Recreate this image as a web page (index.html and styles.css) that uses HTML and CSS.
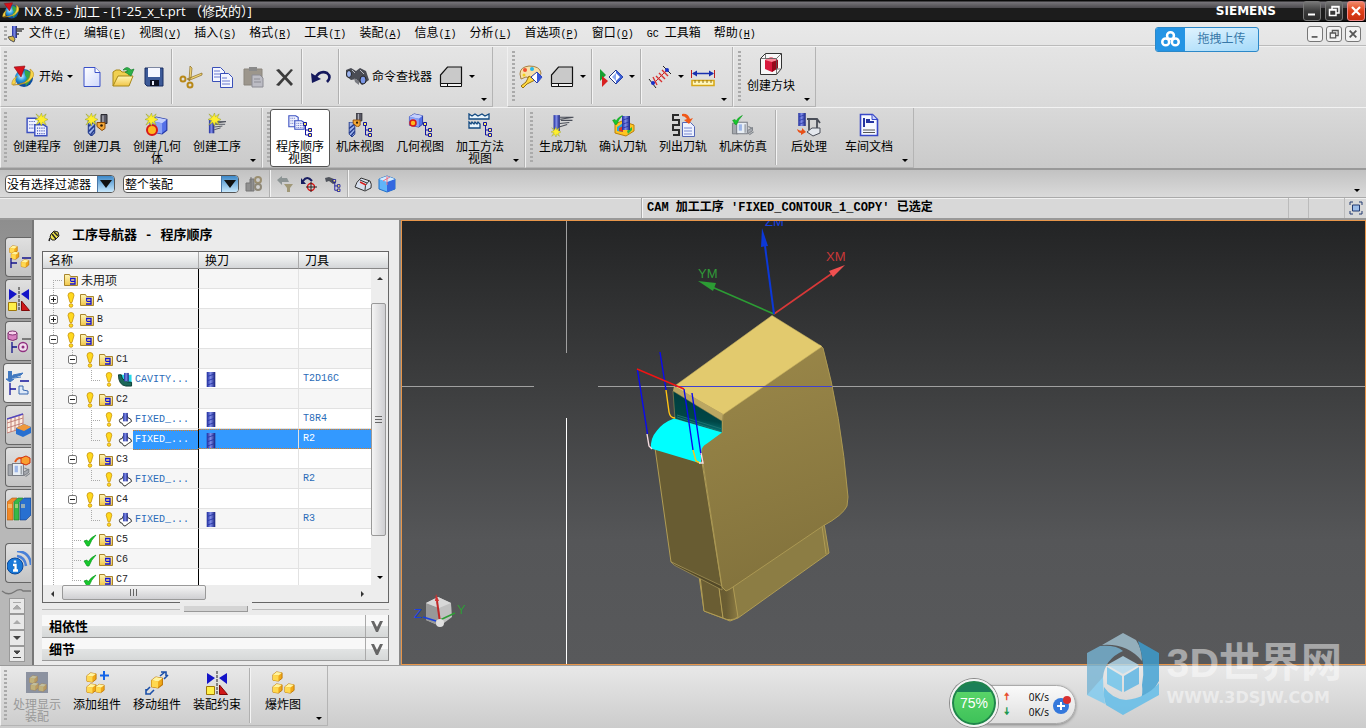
FILE: index.html
```
<!DOCTYPE html>
<html lang="zh-CN">
  <head>
    <meta charset="utf-8">
    <title>NX 8.5 - 加工</title>
    <meta name="viewport" content="width=device-width, initial-scale=1.0">
    <link rel="stylesheet" href="styles.css">
  </head>
  <body>

    <!-- shared icons -->
    <svg class="sprite" aria-hidden="true">
      <defs>
        <linearGradient id="g-drill"><stop offset="0" stop-color="#1c2a9c"/><stop offset=".45" stop-color="#7f8ce8"/><stop offset="1" stop-color="#16207c"/></linearGradient>
        <linearGradient id="g-folder" x2="0" y2="1"><stop offset="0" stop-color="#fff6b8"/><stop offset="1" stop-color="#f0c648"/></linearGradient>
        <linearGradient id="g-sheet" x2="1" y2="1"><stop offset="0" stop-color="#fff"/><stop offset="1" stop-color="#cfd8fb"/></linearGradient>
        <radialGradient id="g-globe" cx=".35" cy=".4"><stop offset="0" stop-color="#d8f4ff"/><stop offset=".5" stop-color="#2a9be0"/><stop offset="1" stop-color="#0b4da0"/></radialGradient>
      </defs>
      <symbol id="nx" viewBox="0 0 24 24">
        <circle cx="13" cy="13" r="9" fill="url(#g-globe)"/>
        <path d="M14 5q7 1 7 8-3 5-6 8-2-5 1-8-3-3-2-8z" fill="#35a54a"/>
        <path d="M19 4q5 3 3 8-5 8-20 8 15-1 17-9 1-4 0-7z" fill="#f7d64a" stroke="#b8860b" stroke-width=".6"/>
        <path d="M1 20q-1-5 5-9-3 5-1 7z" fill="#f7d64a" stroke="#b8860b" stroke-width=".5"/>
        <path d="M3 2l11-1-4 11z" fill="#d8121c" stroke="#8a0a10" stroke-width=".6"/>
      </symbol>
      <symbol id="drill" viewBox="0 0 8 14">
        <rect width="8" height="14" fill="url(#g-drill)"/>
        <path d="M1 4l6-2M1 8l6-2M1 12l6-2" stroke="#2434a4" stroke-width=".8"/>
      </symbol>
      <symbol id="star" viewBox="0 0 14 14">
        <path d="M7 0l1 4 4-3-2 4 4 2-4 2 2 4-4-3-1 4-2-4-4 3 3-5-4-1 4-2-3-4 4 3z" fill="#ffee2e" stroke="#8c9a20" stroke-width=".5"/>
      </symbol>
      <symbol id="tree" viewBox="0 0 9 15">
        <path d="M2.500 3v10h4M2.500 8h4" fill="none" stroke="#1414a0"/>
        <path d="M.5.5h3v3h-3zM5.500 6.500h3v3h-3zM5.500 11.500h3v3h-3z" fill="#ffef60" stroke="#1414a0"/>
      </symbol>
      <symbol id="program" viewBox="0 0 20 18">
        <path d="M1 1h8l3 2v11H1z" fill="#eef1ff" stroke="#3a4fc0" stroke-width="1.300"/>
        <path d="M3 4h6M3 7h6M3 10h6" stroke="#4455b8" stroke-dasharray="1 1"/>
        <path d="M8 7h8l3 2v8H8z" fill="#eef1ff" stroke="#3a4fc0" stroke-width="1.300"/>
        <path d="M10 10h8M10 12.500h8M10 15h8" stroke="#4455b8" stroke-dasharray="1 1"/>
      </symbol>
      <symbol id="cube" viewBox="0 0 16 16">
        <path d="M1 4l5-3 9 2v9l-4 3-10-2z" fill="#5470e8" stroke="#2438a8"/>
        <path d="M1 4l5-3 9 2-4 3z" fill="#c3cffc"/>
        <path d="M1 4l10 2v9L1 13z" fill="#8ba2f6"/>
      </symbol>
      <symbol id="gold" viewBox="0 0 12 12">
        <path d="M1 4l4-3 6 1v6l-4 3-6-1z" fill="#f0a818" stroke="#c07808"/>
        <path d="M1 4l4-3 6 1-4 3z" fill="#fff4a0"/>
        <path d="M1 4l6 1v6l-6-1z" fill="#ffd850"/>
      </symbol>
      <symbol id="holder" viewBox="0 0 12 16">
        <path d="M5 0h6v9H5z" fill="#5a5a66" stroke="#2a2a30"/>
        <path d="M7 1v8" stroke="#c8c8d0"/>
        <path d="M1 8h8v6l-3 2-5-4z" fill="#f4a838" stroke="#8a4a08"/>
        <circle cx="5.500" cy="11" r="1.300" fill="#2a1a08"/>
      </symbol>
      <symbol id="bit" viewBox="0 0 8 16">
        <path d="M1 0h6v13l-3 3-3-3z" fill="#9db3ea" stroke="#223a8c"/>
        <path d="M1 7l6-5M1 12l6-6M3 15l4-5" stroke="#223a8c" stroke-width="1.500"/>
      </symbol>
      <symbol id="folder" viewBox="0 0 16 16">
        <path d="M1.500 2.500h5l1 2h7v9h-13z" fill="url(#g-folder)" stroke="#a8842c"/>
        <path d="M7 6.500h5v5.500H7M8 9.300h4" fill="none" stroke="#1414d8" stroke-width="1.300"/>
        <path d="M7.600 6v3.500" stroke="#1414d8"/>
      </symbol>
      <symbol id="bang" viewBox="0 0 8 16">
        <path d="M4 .5q3 0 3 3L5 10.500H3L1 3.500q0-3 3-3z" fill="#ffd91e" stroke="#c89208" stroke-width=".8"/>
        <circle cx="4" cy="13.500" r="1.800" fill="#ffd91e" stroke="#c89208" stroke-width=".8"/>
      </symbol>
      <symbol id="check" viewBox="-1 -1 16 16">
        <path d="M1 8l3-1 1 2q3-5 8-7-5 5-7 11H4z" fill="#16c82c" stroke="#0a9a1a" stroke-width=".7"/>
      </symbol>
      <symbol id="cavity" viewBox="0 0 16 16">
        <path d="M2 3h13v11H9Q3 13 2 3z" fill="#28d8e8"/>
        <path d="M1 3h3q1 8 11 8v4H9Q1 14 1 3z" fill="#1c6858" stroke="#0a3a30"/>
        <rect x="7" y="1" width="5" height="9" fill="url(#g-drill)"/>
      </symbol>
      <symbol id="contour" viewBox="0 0 16 16">
        <path d="M2 9q0-2 3-2 1-4 3-4 3 0 3 3 4 1 4 4l-3 2-4 3q-2 0-3-3-3 0-3-3z" fill="#fff" stroke="#222"/>
        <rect x="6" y="1" width="5" height="9" fill="url(#g-drill)"/>
      </symbol>
      <symbol id="operation" viewBox="0 0 22 20">
        <path d="M8 4h13M9 7h11M8 10l9-1M8 13l7-2M8 6l13-2" stroke="#4a4e58" fill="none"/>
        <path d="M2 2h6v15H2z" fill="url(#g-drill)"/>
      </symbol>
      <symbol id="machine" viewBox="0 0 22 18">
        <path d="M1 5h5v10H1zM15 12l5-3v3l-4 3z" fill="#a4a8ae" stroke="#6a6e74" stroke-width=".7"/>
        <path d="M5 4h10v11H5z" fill="#e8eef4" stroke="#787c84"/>
        <path d="M7 6h3v6H7z" fill="#9cb6e8"/>
        <path d="M13 6v8M17 16l4-3M16 8l4 2" stroke="#80868c"/>
      </symbol>
      <symbol id="section" viewBox="0 0 24 24">
        <path d="M1.500 19V10l7-8h14v17z" fill="#c9c9c9" stroke="#111" stroke-width="1.200"/>
        <path d="M1.500 18.500h21v3h-21z" fill="#f4f4f4" stroke="#111"/>
        <path d="M8.500 18v4" stroke="#111"/>
      </symbol>
      <symbol id="mates" viewBox="0 0 24 24">
        <path d="M2 2l8 5-8 6zM22 2l-8 5 8 6z" fill="#1414c8"/>
        <path d="M12 0v24" stroke="#222" stroke-dasharray="3 1"/>
        <path d="M1.500 15.500h8v8h-8z" fill="#fff04a" stroke="#a07808"/>
        <path d="M14.500 14v9.500h8z" fill="#d01818" stroke="#800808"/>
      </symbol>
      <symbol id="restore" viewBox="0 0 12 12">
        <path d="M4 4V1.500h7V8H8.500M1.500 4.500h6.500V10.500H1.500zM1 5h7M4 2h7" fill="none" stroke="currentColor" stroke-width="1.500"/>
      </symbol>
      <symbol id="cross" viewBox="0 0 12 12"><path d="M2 2l8 8M10 2l-8 8" stroke="currentColor" stroke-width="2.200"/></symbol>
      <symbol id="minimise" viewBox="0 0 12 12"><path d="M2 9.500h7" stroke="currentColor" stroke-width="2"/></symbol>
    </svg>

    <header class="titlebar">
      <svg class="app-icon"><use href="#nx"/></svg>
      <h1>NX 8.5 - 加工 - [1-25_x_t.prt （修改的）]</h1>
      <span class="brand">SIEMENS</span>
      <div class="window-buttons">
        <button type="button" aria-label="最小化"><svg><use href="#minimise"/></svg></button>
        <button type="button" aria-label="还原"><svg><use href="#restore"/></svg></button>
        <button type="button" class="close" aria-label="关闭"><svg><use href="#cross"/></svg></button>
      </div>
    </header>

    <div class="chrome">
      <nav class="menubar">
        <span class="grip"></span>
        <svg class="menu-icon" viewBox="0 0 18 18"><path d="M5 1h5v12H5z" fill="url(#g-drill)"/><path d="M9 4h8M9 6h6M9 9h3" stroke="#444" stroke-width="1.500"/><path d="M1 12l5-1 2 3-1 3-4-2z" fill="#d8b848" stroke="#555"/></svg>
        <ul>
          <li><button type="button">文件<span>(<u>F</u>)</span></button></li>
          <li><button type="button">编辑<span>(<u>E</u>)</span></button></li>
          <li><button type="button">视图<span>(<u>V</u>)</span></button></li>
          <li><button type="button">插入<span>(<u>S</u>)</span></button></li>
          <li><button type="button">格式<span>(<u>R</u>)</span></button></li>
          <li><button type="button">工具<span>(<u>T</u>)</span></button></li>
          <li><button type="button">装配<span>(<u>A</u>)</span></button></li>
          <li><button type="button">信息<span>(<u>I</u>)</span></button></li>
          <li><button type="button">分析<span>(<u>L</u>)</span></button></li>
          <li><button type="button">首选项<span>(<u>P</u>)</span></button></li>
          <li><button type="button">窗口<span>(<u>O</u>)</span></button></li>
          <li><button type="button"><span>GC </span>工具箱</button></li>
          <li><button type="button">帮助<span>(<u>H</u>)</span></button></li>
        </ul>
        <div class="child-buttons">
          <button type="button" aria-label="最小化"><svg><use href="#minimise"/></svg></button>
          <button type="button" aria-label="还原"><svg><use href="#restore"/></svg></button>
          <button type="button" aria-label="关闭"><svg><use href="#cross"/></svg></button>
        </div>
      </nav>

      <div class="toolbar-row">
        <div class="toolbar">
          <span class="grip"></span>
          <button type="button" class="tool labelled"><svg><use href="#nx"/></svg>开始<i class="caret"></i></button>
          <button type="button" class="tool" aria-label="新建"><svg viewBox="0 0 24 24"><path d="M4 2.500h11l5 5v14H4z" fill="url(#g-sheet)" stroke="#3a50c8"/><path d="M15 2.500v5h5" fill="#fff" stroke="#3a50c8"/></svg></button>
          <button type="button" class="tool" aria-label="打开"><svg viewBox="0 0 24 24"><path d="M2 21V7l3-2h4l2 2h7v4" fill="#f0d050" stroke="#a88818"/><path d="M2 21l5-10h15l-4 10z" fill="url(#g-folder)" stroke="#a88818"/><path d="M12 5q4-5 8 0l3-1-3 7-6-4 3-1q-2-2-5-1z" fill="#2cb048" stroke="#0c7824" stroke-width=".6"/></svg></button>
          <button type="button" class="tool" aria-label="保存"><svg viewBox="0 0 24 24"><path d="M3 3h18v18H5l-2-2z" fill="#3c5a98" stroke="#182c60"/><path d="M6 3h12v9H6z" fill="#f4f6ff"/><path d="M8 15h9v6H8z" fill="#0c1020"/><path d="M10 16h2v4h-2z" fill="#e8ecf8"/></svg></button>
          <span class="sep"></span>
          <button type="button" class="tool" aria-label="剪切"><svg viewBox="0 0 24 24"><path d="M11 1l2 2-1 10-2 3zM23 8v2l-12 5-3-1z" fill="#f4d878" stroke="#8a6a20" stroke-width=".7"/><circle cx="4" cy="14" r="2.500" fill="none" stroke="#b88818" stroke-width="2"/><circle cx="11" cy="20" r="2.500" fill="none" stroke="#b88818" stroke-width="2"/></svg></button>
          <button type="button" class="tool" aria-label="复制"><svg viewBox="0 0 24 24"><path d="M2.500 2.500h8l4 4v10h-12z" fill="#f4f6ff" stroke="#3a50b8"/><path d="M4 6h6M4 9h8M4 12h8" stroke="#6878d0"/><path d="M10.500 8.500h8l4 4v10h-12z" fill="#f4f6ff" stroke="#3a50b8"/><path d="M12 13h5M12 16h8M12 19h8" stroke="#6878d0"/></svg></button>
          <button type="button" class="tool" aria-label="粘贴" disabled><svg viewBox="0 0 24 24"><path d="M3 4h18v16H3z" fill="#9c968c" stroke="#8a857c"/><path d="M8 2h8v4H8z" fill="#8a8a8a"/><path d="M11 10h8l3 3v9H11z" fill="#bcbcc4" stroke="#8c8c94"/><path d="M13 14h6M13 17h7" stroke="#8c8c94"/></svg></button>
          <button type="button" class="tool" aria-label="删除"><svg viewBox="0 0 24 24"><path d="M4 5l3-1 14 15-2 2zM19 4l2 1L7 21l-3-1z" fill="#3c3c3c"/></svg></button>
          <span class="sep"></span>
          <button type="button" class="tool" aria-label="撤消"><svg viewBox="0 0 24 24"><path d="M6 13q5-8 12-5 5 4 0 9" fill="none" stroke="#14185c" stroke-width="2.600"/><path d="M2 8l1 10 9-4z" fill="#14185c"/></svg></button>
          <span class="sep"></span>
          <button type="button" class="tool labelled finder"><svg viewBox="0 0 24 24"><path d="M1 5l5-2 5 3 4-3 6 3 3 9-7 5-6-6-5 1-5-4z" fill="#4a4c54"/><ellipse cx="4" cy="9" rx="2.500" ry="3.500" fill="#9cb4f0" stroke="#222"/><ellipse cx="18" cy="15" rx="3" ry="4" fill="#7c98e8" stroke="#222"/><path d="M9 13l5 3v4l-4-3z" fill="#787a80"/><path d="M7 5l3 3M15 5l4 4" stroke="#b8bac4"/></svg>命令查找器</button>
          <button type="button" class="tool" aria-label="截面"><svg><use href="#section"/></svg></button>
          <button type="button" class="drop" aria-label="更多"><i class="caret"></i></button>
          <button type="button" class="overflow" aria-label="工具条选项"><i class="caret"></i></button>
        </div>
        <div class="toolbar gap-before">
          <span class="grip"></span>
          <button type="button" class="tool" aria-label="编辑对象显示"><svg viewBox="0 0 24 24"><path d="M1 9q0-7 9-8 11 0 12 7 0 3-5 3l-6 2-4-1-5 2z" fill="#f8e0a8" stroke="#a88040"/><circle cx="6" cy="5" r="2" fill="#f05030"/><circle cx="13" cy="4" r="2" fill="#28b8e8"/><circle cx="5" cy="10" r="1.500" fill="#f0d020"/><path d="M10 11l6 4-8 4-4 4-2-2 5-4z" fill="#ffd840" stroke="#987010"/><path d="M12 12l6-5 5 5-5 6z" fill="#fff" stroke="#2438a0"/><path d="M18 7l5 5-5 6z" fill="#3858d8"/></svg></button>
          <button type="button" class="tool" aria-label="截面"><svg><use href="#section"/></svg></button>
          <button type="button" class="drop" aria-label="更多"><i class="caret"></i></button>
          <span class="sep"></span>
          <button type="button" class="tool" aria-label="显示"><svg viewBox="0 0 24 24"><path d="M1 4l6 6-6 6z" fill="#18a030"/><path d="M3 11l6 5-6 6z" fill="#d82020"/><path d="M10 12l7-7 7 7-7 7z" fill="#fff" stroke="#1c3080"/><path d="M17 5l7 7-7 7z" fill="#3c60d8"/><path d="M17 8l4 4-4 4-4-4z" fill="#fff"/><path d="M17 8l-4 4 4 4z" fill="#8ca8f0"/></svg></button>
          <button type="button" class="drop" aria-label="更多"><i class="caret"></i></button>
          <span class="sep"></span>
          <button type="button" class="tool" aria-label="测量"><svg viewBox="0 0 24 24"><path d="M5 19L19 5" stroke="#c02828"/><path d="M8 11l6 6M11 8l6 6M14 5l6 6M5 12l4 8" stroke="#d83030" stroke-width="1.400"/><path d="M1 14l7 9M15 1l8 8" stroke="#222"/><circle cx="5" cy="18" r="2" fill="#1830c8"/><circle cx="19" cy="5" r="2" fill="#1830c8"/></svg></button>
          <button type="button" class="drop" aria-label="更多"><i class="caret"></i></button>
          <button type="button" class="tool" aria-label="测量距离"><svg viewBox="0 0 24 24"><path d="M2 8.500h20" stroke="#1830b0" stroke-width="1.500"/><path d="M1 8.500l5-3v6zM23 8.500l-5-3v6z" fill="#1830b0"/><path d="M.5 5v8M23.500 5v8" stroke="#c02020"/><path d="M1 15.500h22v5H1z" fill="#fff8c0" stroke="#d8a818" stroke-width="1.600"/><path d="M4 15v3M8 15v3M12 15v3M16 15v3M20 15v3" stroke="#907010"/></svg></button>
          <button type="button" class="overflow" aria-label="工具条选项"><i class="caret"></i></button>
        </div>
        <div class="toolbar">
          <span class="grip"></span>
          <button type="button" class="big"><svg viewBox="0 0 24 24"><path d="M1.500 6.500l5-5h16v15l-5 6h-16z" fill="#f8f8f8" stroke="#333"/><path d="M6 8l6-3 7 3v8l-6 4-7-3z" fill="#d8183c"/><path d="M6 8l6-3 7 3-6 2z" fill="#f88898"/><path d="M13 10l6-2v8l-6 4z" fill="#98081c"/><path d="M1.500 6.500h16v16M17.500 6.500l5-5M6.500 1.500v5M22 17h-5" fill="none" stroke="#555" stroke-width=".8"/></svg><span>创建方块</span></button>
          <button type="button" class="overflow" aria-label="工具条选项"><i class="caret"></i></button>
        </div>
      </div>

      <div class="toolbar-row">
        <div class="toolbar">
          <span class="grip"></span>
          <button type="button" class="big"><svg viewBox="0 0 24 24"><use href="#program" x="1" y="4" width="22" height="20"/><use href="#star" x="10" width="13" height="13"/></svg><span>创建程序</span></button>
          <button type="button" class="big"><svg viewBox="0 0 24 24"><use href="#bit" x="2" y="6" width="9" height="17"/><use href="#holder" x="11" y="1" width="12" height="17"/><use href="#star" width="13" height="13"/></svg><span>创建刀具</span></button>
          <button type="button" class="big"><svg viewBox="0 0 24 24"><use href="#cube" x="4" y="2" width="19" height="21"/><circle cx="7" cy="17" r="5" fill="#ffb820" stroke="#d81818" stroke-width="2"/><use href="#star" width="13" height="13"/></svg><span>创建几何体</span></button>
          <button type="button" class="big"><svg viewBox="0 0 24 24"><use href="#operation" x="1" y="5" width="22" height="18"/><use href="#star" x="3" width="13" height="13"/></svg><span>创建工序</span></button>
          <button type="button" class="overflow" aria-label="工具条选项"><i class="caret"></i></button>
        </div>
        <div class="toolbar">
          <span class="grip"></span>
          <button type="button" class="big active"><svg viewBox="0 0 24 24"><use href="#program" y="0" width="17" height="19"/><use href="#tree" x="15" y="9" width="9" height="15"/></svg><span>程序顺序视图</span></button>
          <button type="button" class="big"><svg viewBox="0 0 24 24"><use href="#bit" y="9" width="8" height="15"/><use href="#holder" x="4" width="11" height="14"/><use href="#tree" x="15" y="9" width="9" height="15"/></svg><span>机床视图</span></button>
          <button type="button" class="big"><svg viewBox="0 0 24 24"><use href="#cube" width="16" height="15"/><circle cx="5" cy="10" r="3" fill="#ffb820" stroke="#d81818" stroke-width="1.500"/><use href="#tree" x="15" y="9" width="9" height="15"/></svg><span>几何视图</span></button>
          <button type="button" class="big"><svg viewBox="0 0 24 24"><path d="M1 6V1l3 2 3-2 3 2 4-2 3 2 4-2v5zM1 15V9l2 2 1-2 2 2 1-2 2 2 1-2 2 2v4z" fill="#e8f4fc" stroke="#104880" stroke-width="1.300"/><use href="#tree" x="15" y="9" width="9" height="15"/></svg><span>加工方法视图</span></button>
          <button type="button" class="overflow" aria-label="工具条选项"><i class="caret"></i></button>
        </div>
        <div class="toolbar">
          <span class="grip"></span>
          <button type="button" class="big"><svg viewBox="0 0 24 24"><use href="#operation" x="0" y="0" width="24" height="21"/><use href="#star" y="14" width="10" height="10"/></svg><span>生成刀轨</span></button>
          <button type="button" class="big"><svg viewBox="0 0 24 24"><path d="M4 11l7-3 12 4v6l-8 5-11-3z" fill="#ffc420" stroke="#b88010"/><path d="M6 14l6-4v9l-6-1z" fill="#28a8d8"/><path d="M16 18l5-4v3l-4 4z" fill="#28b848"/><path d="M8 15l4-2v6l-4-1z" fill="#e03820"/><use href="#drill" x="11" y="3" width="8" height="14"/><use href="#check" width="13" height="13"/></svg><span>确认刀轨</span></button>
          <button type="button" class="big"><svg viewBox="0 0 24 24"><path d="M8 2H2v5h6v5H2v5h6v5H2" fill="none" stroke="#2a2a2a" stroke-width="2"/><path d="M11.500 9.500h8l4 4v10h-12z" fill="#eef2ff" stroke="#5468b8"/><path d="M13 15h8M13 18h8M13 21h8" stroke="#7888d0"/><path d="M11 1q6-1 8 5l3-1-4 6-5-4 3-1q-2-3-5-3z" fill="#f05818"/></svg><span>列出刀轨</span></button>
          <button type="button" class="big"><svg viewBox="0 0 24 24"><use href="#machine" x="0" y="5" width="24" height="19"/><use href="#check" width="13" height="13"/></svg><span>机床仿真</span></button>
          <span class="sep"></span>
          <button type="button" class="big"><svg viewBox="0 0 24 24"><use href="#drill" x="1" width="8" height="13"/><path d="M10 6h10l3 4M12 5v12M20 7v9" fill="none" stroke="#4a4e58" stroke-width="1.800"/><path d="M10 19l5-4h8v5l-7 3z" fill="#e4e8ee" stroke="#4a4e58"/><path d="M0 16q4 3 5 1v-2l4 4-5 3v-2q-3 0-4-4z" fill="#e85018"/></svg><span>后处理</span></button>
          <button type="button" class="big"><svg viewBox="0 0 24 24"><path d="M3.500 1.500h12l5 5v16h-17z" fill="#f6f8ff" stroke="#3848c8" stroke-width="1.600"/><path d="M15 1.500v5h5" fill="#cdd6fa" stroke="#3848c8"/><path d="M7 5v9M9 9h8M9 7h4" stroke="#2434a0" stroke-width="2"/><path d="M6 17h12M6 19.500h12" stroke="#555"/></svg><span>车间文档</span></button>
          <button type="button" class="overflow" aria-label="工具条选项"><i class="caret"></i></button>
        </div>
      </div>
    </div>

    <div class="selection-bar">
      <div class="combo filter"><select aria-label="选择过滤器"><option>没有选择过滤器</option></select><span class="combo-arrow"></span></div>
      <div class="combo scope"><select aria-label="选择范围"><option>整个装配</option></select><span class="combo-arrow"></span></div>
      <button type="button" class="small" aria-label="接口" disabled><svg viewBox="0 0 18 18"><path d="M1 8h4V4h4v12H1zM6 2v14" fill="#909090" stroke="#777"/><circle cx="13" cy="5" r="3" fill="none" stroke="#9a8e70" stroke-width="2"/><circle cx="13" cy="12" r="3" fill="none" stroke="#8e8878" stroke-width="2"/></svg></button>
      <span class="sep"></span>
      <button type="button" class="small" aria-label="重置" disabled><svg viewBox="0 0 18 18"><path d="M1 5l5-4v2h5l2 4H6v3z" fill="#8c9494"/><path d="M8 9h9l-3 4v4h-3v-4z" fill="#a09878"/></svg></button>
      <button type="button" class="small" aria-label="后退"><svg viewBox="0 0 18 18"><path d="M3 6q4-6 9 0" fill="none" stroke="#181c60" stroke-width="2"/><path d="M1 3v6h5z" fill="#181c60"/><circle cx="11" cy="12" r="3.500" fill="none" stroke="#d81818" stroke-width="1.400"/><path d="M11 7v10M6 12h11" stroke="#222"/></svg></button>
      <button type="button" class="small" aria-label="查找"><svg viewBox="0 0 18 18"><path d="M1 3l4-1 5 2 2 4-3 1-4-3-3 1z" fill="#50545c"/><use href="#tree" x="8" y="4" width="9" height="13"/></svg></button>
      <span class="sep"></span>
      <button type="button" class="small" aria-label="面"><svg viewBox="0 0 18 18"><path d="M1 12q1-5 6-9l9 3q2 3 1 7l-6 3z" fill="#d8e0ee" stroke="#333"/><path d="M6 5l7 3M11 15q-1-5 4-9" stroke="#333" fill="none"/><path d="M6 7l6 3" stroke="#d82020" stroke-width="1.500"/></svg></button>
      <button type="button" class="small" aria-label="体"><svg viewBox="0 0 18 18"><path d="M1 4l8-3 8 3v10l-8 3-8-3z" fill="#60b4f8" stroke="#2070c8"/><path d="M9 7l8-3v10l-8 3z" fill="#3468e0"/><path d="M1 4l8-3 8 3-8 3z" fill="#d4ecff"/><path d="M9 1v9M5 6l7-4" stroke="#f07080"/></svg></button>
      <button type="button" class="overflow push" aria-label="工具条选项"><i class="caret"></i></button>
    </div>

    <div class="status">
      <p class="cue"></p>
      <p class="message">CAM 加工工序 'FIXED_CONTOUR_1_COPY' 已选定</p>
      <span class="status-cell"></span>
      <span class="status-cell wide"></span>
      <button type="button" class="full-screen" aria-label="全屏显示"><svg viewBox="0 0 14 14"><path d="M4 1H1v3M10 1h3v3M4 13H1v-3M10 13h3v-3" fill="none" stroke="#223a70"/><path d="M3.500 4h7v6h-7z" fill="#9cbce8" stroke="#223a70"/></svg></button>
    </div>

    <main class="workspace">
      <div class="resource-bar">
        <button type="button" class="tab" aria-label="装配导航器"><svg viewBox="0 0 24 24"><use href="#gold" x="1" y="0" width="11" height="9"/><use href="#gold" x="3" y="6" width="10" height="9"/><path d="M4 13v10M4 18h6M15 13h9" stroke="#14148c" stroke-width="1.300"/><use href="#gold" x="13" y="14" width="10" height="9"/></svg></button>
        <button type="button" class="tab" aria-label="约束导航器"><svg><use href="#mates"/></svg></button>
        <button type="button" class="tab" aria-label="部件导航器"><svg viewBox="0 0 24 24"><path d="M1 4v6q5 3 9 0V4z" fill="#d880c0" stroke="#803070"/><ellipse cx="5.500" cy="4" rx="4.500" ry="2" fill="#f8d0ec" stroke="#803070"/><path d="M5 13v11M5 18h5" stroke="#14148c" stroke-width="1.300"/><path d="M15 10h9" stroke="#222"/><circle cx="16" cy="18" r="4.500" fill="#f0dcec" stroke="#903080" stroke-width="1.300"/><circle cx="16" cy="18" r="1.500" fill="#903080"/></svg></button>
        <button type="button" class="tab current" aria-label="工序导航器"><svg viewBox="0 0 24 24"><path d="M2 0h4v9H2z" fill="#4078c0"/><path d="M0 8h8l-4 3zM7 4l10-2-2 2-9 3zM8 7l7-1" fill="#4078c0" stroke="#4078c0"/><path d="M4 12v12M4 18h6M14 10h9" fill="none" stroke="#14149c" stroke-width="1.300"/><path d="M13 15h4v4l5 1v3h-9z" fill="#dce8f8" stroke="#3868b0"/></svg></button>
        <button type="button" class="tab" aria-label="机床导航器"><svg viewBox="0 0 24 24"><path d="M0 6l16-5v14L0 20zM0 10l16-5M0 15l16-5M4 5v14M8 4v14M12 3v14" fill="#fcece0" stroke="#c08078"/><path d="M0 6l16-5" stroke="#5048c0" stroke-width="1.500"/><path d="M9 15l8-4 7 3v6l-8 4-7-3z" fill="#2870d0"/><path d="M9 15l8-4 7 3-7 4z" fill="#f09838"/></svg></button>
        <button type="button" class="tab" aria-label="加工向导"><svg viewBox="0 0 24 24"><use href="#machine" x="0" y="4" width="24" height="20"/><path d="M8 7q3-6 8-3" fill="none" stroke="#e85818" stroke-width="2"/><path d="M14 3l5-2 4 2v5l-4 2-5-2z" fill="#f8a030" stroke="#d03010"/></svg></button>
        <button type="button" class="tab" aria-label="重用库"><svg viewBox="0 0 24 24"><path d="M0 5l5-4h5l-4 4v18H0z" fill="#f08828" stroke="#a85810" stroke-width=".6"/><path d="M7 5l4-4h5l-4 4v18H7z" fill="#38b848" stroke="#187828" stroke-width=".6"/><path d="M13 5l4-4h7v17l-5 5h-6z" fill="#2870d0" stroke="#143c80" stroke-width=".6"/><path d="M1 8h4M1 10h4M8 8h3M8 10h3M14 8h4M14 10h4" stroke="#ffe8a0"/></svg></button>
        <button type="button" class="tab apart" aria-label="Web 浏览器"><svg viewBox="0 0 24 24"><circle cx="8" cy="15" r="8" fill="#1878d8" stroke="#0c4898"/><path d="M8 9.500v2M6 14h2.500v5.500M6 19.500h5" stroke="#fff" stroke-width="2.400"/><path d="M10 5q8 1 9 10M10 0q13 1 14 14" fill="none" stroke="#4880d8" stroke-width="2.600"/></svg></button>
        <svg class="wave" viewBox="0 0 30 8"><path d="M1 3q6 5 12 1t9-1h8" fill="none" stroke="#777" stroke-width="1.300"/></svg>
        <div class="pager">
          <button type="button" aria-label="第一个" disabled><svg viewBox="0 0 10 10"><path d="M1 1.500h8M1 8l4-4 4 4z" fill="currentColor" stroke="currentColor"/></svg></button>
          <button type="button" aria-label="上一个" disabled><svg viewBox="0 0 10 10"><path d="M1 7l4-4 4 4z" fill="currentColor"/></svg></button>
          <button type="button" aria-label="下一个"><svg viewBox="0 0 10 10"><path d="M1 3l4 4 4-4z" fill="currentColor"/></svg></button>
          <button type="button" aria-label="最后一个"><svg viewBox="0 0 10 10"><path d="M2 2l3 3 3-3zM1 8.500h8" fill="currentColor" stroke="currentColor"/></svg></button>
        </div>
      </div>

      <section class="navigator">
        <h2><svg viewBox="0 0 12 12"><path d="M3 4l3-3 4 1 1 4-4 4-3 0-2-3z" fill="#f0e448" stroke="#222"/><path d="M6 2l4 4M2 8l-1 3M4 4l4 5" stroke="#222" stroke-width="1.500"/></svg>工序导航器 - 程序顺序</h2>

        <div class="tree-box">
          <div class="tree-scroll">
            <table class="tree">
              <thead>
                <tr><th class="col-name" scope="col">名称</th><th class="col-change" scope="col">换刀</th><th scope="col">刀具</th></tr>
              </thead>
              <tbody>
                <tr><td><div class="node"><i class="ln start"></i><svg class="ic"><use href="#folder"/></svg><span class="cjk">未用项</span></div></td><td></td><td></td></tr>
                <tr><td><div class="node"><i class="ln box plus"></i><svg class="ic"><use href="#bang"/></svg><svg class="ic"><use href="#folder"/></svg><span>A</span></div></td><td></td><td></td></tr>
                <tr><td><div class="node"><i class="ln box plus"></i><svg class="ic"><use href="#bang"/></svg><svg class="ic"><use href="#folder"/></svg><span>B</span></div></td><td></td><td></td></tr>
                <tr><td><div class="node"><i class="ln box"></i><svg class="ic"><use href="#bang"/></svg><svg class="ic"><use href="#folder"/></svg><span>C</span></div></td><td></td><td></td></tr>
                <tr><td><div class="node"><i class="ln"></i><i class="ln box"></i><svg class="ic"><use href="#bang"/></svg><svg class="ic"><use href="#folder"/></svg><span>C1</span></div></td><td></td><td></td></tr>
                <tr class="op"><td><div class="node"><i class="ln"></i><i class="ln"></i><i class="ln end"></i><svg class="ic"><use href="#bang"/></svg><svg class="ic"><use href="#cavity"/></svg><span>CAVITY...</span></div></td><td><svg class="ic"><use href="#drill"/></svg></td><td>T2D16C</td></tr>
                <tr><td><div class="node"><i class="ln"></i><i class="ln box"></i><svg class="ic"><use href="#bang"/></svg><svg class="ic"><use href="#folder"/></svg><span>C2</span></div></td><td></td><td></td></tr>
                <tr class="op"><td><div class="node"><i class="ln"></i><i class="ln"></i><i class="ln tee"></i><svg class="ic"><use href="#bang"/></svg><svg class="ic"><use href="#contour"/></svg><span>FIXED_...</span></div></td><td><svg class="ic"><use href="#drill"/></svg></td><td>T8R4</td></tr>
                <tr class="op selected"><td><div class="node"><i class="ln"></i><i class="ln"></i><i class="ln end"></i><svg class="ic"><use href="#bang"/></svg><svg class="ic"><use href="#contour"/></svg><span>FIXED_...</span></div></td><td><svg class="ic"><use href="#drill"/></svg></td><td>R2</td></tr>
                <tr><td><div class="node"><i class="ln"></i><i class="ln box"></i><svg class="ic"><use href="#bang"/></svg><svg class="ic"><use href="#folder"/></svg><span>C3</span></div></td><td></td><td></td></tr>
                <tr class="op"><td><div class="node"><i class="ln"></i><i class="ln"></i><i class="ln end"></i><svg class="ic"><use href="#bang"/></svg><svg class="ic"><use href="#contour"/></svg><span>FIXED_...</span></div></td><td></td><td>R2</td></tr>
                <tr><td><div class="node"><i class="ln"></i><i class="ln box"></i><svg class="ic"><use href="#bang"/></svg><svg class="ic"><use href="#folder"/></svg><span>C4</span></div></td><td></td><td></td></tr>
                <tr class="op"><td><div class="node"><i class="ln"></i><i class="ln"></i><i class="ln end"></i><svg class="ic"><use href="#bang"/></svg><svg class="ic"><use href="#contour"/></svg><span>FIXED_...</span></div></td><td><svg class="ic"><use href="#drill"/></svg></td><td>R3</td></tr>
                <tr><td><div class="node"><i class="ln"></i><i class="ln tee"></i><svg class="ic"><use href="#check"/></svg><svg class="ic"><use href="#folder"/></svg><span>C5</span></div></td><td></td><td></td></tr>
                <tr><td><div class="node"><i class="ln"></i><i class="ln tee"></i><svg class="ic"><use href="#check"/></svg><svg class="ic"><use href="#folder"/></svg><span>C6</span></div></td><td></td><td></td></tr>
                <tr><td><div class="node"><i class="ln"></i><i class="ln end"></i><svg class="ic"><use href="#check"/></svg><svg class="ic"><use href="#folder"/></svg><span>C7</span></div></td><td></td><td></td></tr>
              </tbody>
            </table>
          </div>
          <div class="vbar">
            <span class="corner"></span>
            <span class="arrow"><i class="up"></i></span>
            <span class="thumb"></span>
            <span class="arrow bottom"><i class="caret"></i></span>
          </div>
          <div class="hbar">
            <span class="arrow"><i class="left"></i></span>
            <span class="thumb"></span>
            <span class="arrow bottom"><i class="right"></i></span>
          </div>
        </div>

        <div class="splitter"><span></span></div>
        <button type="button" class="panel-head"><span>相依性</span><svg viewBox="0 0 12 12"><path d="M0 1h3l3 6 3-6h3L7 12H5z" fill="#666"/></svg></button>
        <button type="button" class="panel-head"><span>细节</span><svg viewBox="0 0 12 12"><path d="M0 1h3l3 6 3-6h3L7 12H5z" fill="#666"/></svg></button>
      </section>

      <div class="viewport">
        <svg viewBox="402 221 963 443" preserveAspectRatio="xMidYMid slice">
          <defs>
            <linearGradient id="side" x1=".3" y1="0" x2=".5" y2="1"><stop offset="0" stop-color="#9a8749"/><stop offset="1" stop-color="#82723c"/></linearGradient>
            <linearGradient id="round"><stop offset="0" stop-color="#675a30"/><stop offset=".4" stop-color="#6b5e33"/><stop offset="1" stop-color="#8c7b43"/></linearGradient>
            <linearGradient id="wall" x1=".6" y1="0" x2=".4" y2="1"><stop offset="0" stop-color="#003c3c"/><stop offset=".65" stop-color="#004646"/><stop offset="1" stop-color="#0a8a8a"/></linearGradient>
          </defs>
          <!-- crosshair -->
          <path d="M402 386.500h132M598 386.500h767M566.500 221v132" stroke="#a0a0a0"/>
          <path d="M566.500 418v247" stroke="#fff"/>
          <!-- base -->
          <path d="M699 576l5 35 21 8 5 2 8-3 91-65-5-30-94 40z" fill="#8c7d44" stroke="#b09c55"/>
          <path d="M700 576l4 35 19 7-4-32z" fill="#6a5d33" stroke="#b09c55"/>
          <path d="M719 588l4 30q8 4 15-1l-5-31z" fill="url(#round)" stroke="#b09c55"/>
          <path d="M822 526l4 28" stroke="#b09c55"/>
          <!-- body -->
          <path d="M655 448l16 114 51 26-20-126z" fill="#685c32" stroke="#b09c55"/>
          <path d="M671 562l51 24v4l-48-25z" fill="#544a28" stroke="#a8965a" stroke-width=".7"/>
          <path d="M723 414l97-69 3 3q18 66 25 149l-1 9q-4 9-24 20l-93 63-4 2-4-4-19-124q-3-12 0-18l19-13z" fill="url(#side)" stroke="#ab9853"/>
          <path d="M772 315.500l50 31-99 68-49-28z" fill="#e2ca6e" stroke="#c6b060" stroke-width=".6"/>
          <path d="M674 386l49 28-1 7-49-30z" fill="#bba762"/>
          <path d="M673 391l49 30v12l-47-14z" fill="url(#wall)" stroke="#b09c55" stroke-width=".5"/>
          <path d="M677 415l45 14M677 417l45 15" stroke="#1c7070"/>
          <path d="M674 418.500l48 14-15 11q-6 3-6 10v10l-50-15q-1-10 6-18 6-8 17-12z" fill="#00ffff"/>
          <path d="M675 386.500h157" stroke="#4040d0"/>
          <!-- tool path -->
          <g fill="none" stroke-width="1.400">
            <path d="M660 352l6 38M637.500 370l10 64M684 389l9 61M692 393l9 62" stroke="#0a0af0"/>
            <path d="M666 390l3 22q1 6 6 6M693 450l3 11 4 2" stroke="#ffc414"/>
            <path d="M637 369l47 20" stroke="#f01414"/>
            <path d="M647 434l2 12 3 3M701 453l2 10h-4" stroke="#f4dce0"/>
          </g>
          <!-- machine coordinate system -->
          <g class="axis">
            <path d="M774 314l60-42" stroke="#d83838" stroke-width="1.600"/><path d="M845 265l-16 6 4 6z" fill="#f05050"/>
            <path d="M774 314l-62-27" stroke="#2c9c34" stroke-width="1.600"/><path d="M698 281l18 2-3 8z" fill="#2c9c34"/>
            <path d="M774 314l-9-68" stroke="#0c38d8" stroke-width="2"/><path d="M762 228l6 18-7 1z" fill="#0c38d8"/>
            <text x="826" y="261" fill="#c83838">XM</text>
            <text x="698" y="278" fill="#309a38">YM</text>
            <text x="765" y="226" fill="#1840e0">ZM</text>
          </g>
          <!-- orientation triad -->
          <path d="M426 603l12-6 13 6 1 14-12 9-14-6z" fill="#c0c0c0"/>
          <path d="M426 603l13 5 1 18-14-6z" fill="#989898"/><path d="M426 603l12-6 13 6-12 5z" fill="#d8d8d8"/>
          <path d="M440 622l-3-21" stroke="#c02828" stroke-width="2"/><path d="M435 601h4l-3-7z" fill="#d03030"/>
          <path d="M440 620l15-7" stroke="#2c9c34" stroke-width="1.500"/><path d="M436 621l-13-4" stroke="#1840e0" stroke-width="1.500"/>
          <circle cx="440" cy="623" r="4" fill="#e0e0e0"/>
          <g class="axis"><text x="414" y="618" fill="#1840e0">Z</text><text x="457" y="614" fill="#309a38">Y</text></g>
        </svg>
      </div>
    </main>

    <footer class="dock">
      <div class="toolbar">
        <span class="grip"></span>
        <button type="button" class="big" disabled><svg viewBox="0 0 24 24"><path d="M1 1h22v21H1z" fill="#8c92a0"/><g opacity=".45"><use href="#gold" x="3" y="4" width="11" height="9"/><use href="#gold" x="5" y="11" width="9" height="9"/><use href="#gold" x="13" y="12" width="9" height="9"/></g></svg><span>处理显示装配</span></button>
        <button type="button" class="big"><svg viewBox="0 0 24 24"><use href="#gold" x="1" y="1" width="11" height="11"/><use href="#gold" x="1" y="12" width="11" height="11"/><use href="#gold" x="10" y="12" width="10" height="11"/><path d="M19 0v9M15 4.500h9" stroke="#1464e8" stroke-width="2"/></svg><span>添加组件</span></button>
        <button type="button" class="big"><svg viewBox="0 0 24 24"><use href="#gold" x="5" y="5" width="14" height="13"/><path d="M15 5l5-4M19 8l4-4M16 1h5v4M1 20l4-4M5 23l4-4M1 18v5h5" fill="none" stroke="#1c50a8" stroke-width="1.600"/></svg><span>移动组件</span></button>
        <button type="button" class="big"><svg><use href="#mates"/></svg><span>装配约束</span></button>
        <span class="sep"></span>
        <button type="button" class="big"><svg viewBox="0 0 24 24"><use href="#gold" x="1" y="0" width="11" height="11"/><use href="#gold" x="1" y="12" width="11" height="11"/><use href="#gold" x="13" y="12" width="11" height="11"/></svg><span>爆炸图</span></button>
        <button type="button" class="overflow" aria-label="工具条选项"><i class="caret"></i></button>
      </div>
    </footer>

    <!-- floating widgets -->
    <button type="button" class="upload">
      <svg viewBox="0 0 30 24"><g fill="none" stroke="#fff" stroke-width="2.600"><circle cx="15" cy="8" r="3.600"/><circle cx="10" cy="14.500" r="3.600"/><circle cx="20" cy="14.500" r="3.600"/></g></svg><span>拖拽上传</span>
    </button>

    <div class="speed">
      <strong>75%</strong>
      <dl>
        <dt class="up-rate">🠅</dt><dd>0K/s</dd>
        <dt class="down-rate">🠇</dt><dd>0K/s</dd>
      </dl>
      <button type="button" aria-label="加速"><svg viewBox="0 0 18 18"><circle cx="8" cy="10" r="8" fill="#3478dc"/><path d="M8 6v8M4 10h8" stroke="#fff" stroke-width="2"/><circle cx="14" cy="4" r="4" fill="#d83030"/></svg></button>
    </div>

    <div class="watermark">
      <svg viewBox="0 0 72 82">
        <path d="M0 20L13 13Q30 12 36 18 18 26 16 44 15 54 17 62L0 62z" fill="#76b4d4"/>
        <path d="M15 12L36 0l13 7q6 9 6 21Q40 10 15 12z" fill="#a3c4d4"/>
        <path d="M51 8l21 12v28Q66 60 54 66q2-6 1-14 4-20-4-44z" fill="#3ca0d4"/>
        <path d="M72 50v12L36 82 19 72q-3-8-2-18 8 12 22 13 20-2 33-17z" fill="#5cbcea"/>
        <path d="M0 62l16-18q0 14 2 27z" fill="#7ccaf0"/>
        <path d="M20 32l16-9 16 9-16 9z" fill="#b4dcf0"/><path d="M20 34l15 9v16l-15-8z" fill="#6cc4ec"/><path d="M52 34l-15 9v16l15-8z" fill="#58b4e4"/>
      </svg>
      <p><b>3D世界网</b><small>WWW.3DSJW.COM</small></p>
    </div>

  </body>
</html>
```

FILE: styles.css
```
*,
*:before,
*:after {
  box-sizing: border-box;
}

html,
body {
  height: 100%;
}

body {
  margin: 0;
  display: flex;
  flex-direction: column;
  position: relative;
  overflow: hidden;
  background: #d6d6d6;
  color: #000;
  font: 12px/12px "Liberation Sans", "Noto Sans CJK SC", sans-serif;
}

h1,
h2,
p,
ul,
dl,
dd {
  margin: 0;
  padding: 0;
}

button {
  margin: 0;
  padding: 0;
  border: 0;
  background: none;
  color: inherit;
  font: inherit;
}

svg {
  display: block;
  flex: none;
}

.sprite {
  position: absolute;
  width: 0;
  height: 0;
}

/* title bar */
.titlebar {
  flex: none;
  height: 22px;
  display: flex;
  align-items: center;
  padding: 0 1px 0 2px;
  background: linear-gradient(#0a0a0a 0 1px, #77757a 2px, #4c4a4e 8px, #1c1c1c 8px 20px, #000 21px);
  color: #fff;
}

.app-icon {
  width: 18px;
  height: 18px;
}

.titlebar h1 {
  flex: 1;
  padding-left: 4px;
  font: 13px/18px "Open Sans", "Noto Sans CJK SC", sans-serif;
}

.brand {
  font: bold 12px/18px "DejaVu Sans", sans-serif;
}

.window-buttons,
.child-buttons {
  display: flex;
  gap: 4px;
  margin-left: 27px;
}

.window-buttons button {
  width: 18px;
  height: 20px;
  display: grid;
  place-items: center;
  border: 1px solid #777;
  border-radius: 3px;
  background: linear-gradient(#777, #3c3c3c 50%, #2a2a2a);
}

.window-buttons svg {
  width: 12px;
  height: 12px;
}

.window-buttons .close {
  border-color: #e88;
  background: linear-gradient(#f08868, #e04018 50%, #c83010);
}

/* menu and toolbars */
.chrome {
  flex: none;
  background: linear-gradient(#e9e9e9, #dcdcdc 50%, #cacaca);
  border-bottom: 2px solid #999;
}

.menubar {
  height: 24px;
  display: flex;
  align-items: center;
  border-bottom: 1px solid #bbb;
  padding: 0 5px 0 4px;
}

.menubar .grip {
  height: 15px;
}

.menu-icon {
  width: 18px;
  height: 18px;
  margin-right: 4px;
}

.menubar ul {
  flex: 1;
  display: flex;
  gap: 13px;
  list-style: none;
}

.menubar li button {
  display: block;
  white-space: pre;
  line-height: 16px;
}

.menubar li span {
  font: 10px/16px "Liberation Mono", monospace;
}

.child-buttons {
  gap: 3px;
}

.child-buttons button {
  width: 16px;
  height: 16px;
  display: grid;
  place-items: center;
  border: 1px solid #777;
  border-radius: 3px;
  background: #f2f2f2;
  color: #555;
}

.child-buttons svg {
  width: 10px;
  height: 10px;
}

.grip {
  flex: none;
  width: 3px;
  height: 52px;
  background: repeating-linear-gradient(#aaa 0 2px, transparent 2px 4px);
}

.toolbar-row {
  display: flex;
  height: 61px;
  border-top: 1px solid #f2f2f2;
}

.toolbar {
  flex: none;
  display: flex;
  align-items: center;
  padding: 0 3px 0 4px;
  border-right: 1px solid #b4b4b4;
  border-bottom: 1px solid #b4b4b4;
  border-left: 1px solid #f0f0f0;
}

.toolbar:first-child {
  padding-left: 3px;
}

.gap-before {
  margin-left: 14px;
}

.tool {
  width: 31px;
  height: 32px;
  display: flex;
  align-items: center;
  justify-content: center;
}

.tool svg {
  width: 24px;
  height: 24px;
}

.labelled {
  width: auto;
  gap: 4px;
  padding: 0 3px 0 4px;
}

.finder {
  gap: 3px;
  padding: 0 3px;
}

.caret {
  display: block;
  flex: none;
  width: 6px;
  border: 3px solid transparent;
  border-top-color: currentColor;
  border-bottom-width: 0;
}

.drop {
  width: 12px;
  height: 32px;
  display: grid;
  place-items: center;
}

.overflow {
  align-self: stretch;
  flex: none;
  width: 11px;
  display: flex;
  align-items: flex-end;
  justify-content: center;
  padding-bottom: 5px;
}

.sep {
  flex: none;
  align-self: stretch;
  width: 2px;
  margin: 2px;
  background: linear-gradient(90deg, #b0b0b0 50%, #f4f4f4 50%);
}

.big {
  flex: none;
  width: 60px;
  height: 58px;
  display: flex;
  flex-direction: column;
  align-items: center;
  gap: 4px;
  padding: 3px 4px 0;
  border: 1px solid transparent;
}

.big svg {
  width: 24px;
  height: 24px;
}

.big:disabled {
  color: #999;
}

.big.active {
  border-color: #555;
  border-radius: 3px;
  background: #fff;
}

/* selection bar */
.selection-bar {
  flex: none;
  height: 27px;
  display: flex;
  align-items: center;
  padding: 0 4px 0 5px;
  background: linear-gradient(#c2c2c2, #dadada);
}

.selection-bar .sep {
  margin: 0 2px;
}

.combo {
  height: 18px;
  display: flex;
  margin-right: 8px;
  border: 1px solid #555;
  border-radius: 4px;
  background: #fff;
  overflow: hidden;
}

.filter {
  width: 110px;
}

.scope {
  width: 116px;
}

.combo select {
  flex: 1;
  min-width: 0;
  appearance: none;
  border: 0;
  padding: 0 1px;
  background: none;
  color: #000;
  font: 12px/16px "Noto Sans CJK SC", sans-serif;
}

.combo-arrow {
  width: 17px;
  display: grid;
  place-items: center;
  border-left: 1px solid #4a78a8;
  background: linear-gradient(#3c88c8, #c8e8fc);
}

.combo-arrow:after {
  content: "";
  border: 6px solid transparent;
  border-top: 8px solid #111;
  border-bottom-width: 0;
}

.small {
  width: 24px;
  height: 24px;
  display: grid;
  place-items: center;
}

.small svg {
  width: 18px;
  height: 18px;
}

.scope + .small {
  margin: 0 1px 0 -5px;
}

.push {
  margin-left: auto;
  padding-bottom: 5px;
}

/* status line */
.status {
  flex: none;
  height: 23px;
  display: flex;
  align-items: stretch;
  border-top: 1px solid #aaa;
  border-bottom: 2px solid #999;
  background: #d8d8d8;
  box-shadow: inset 0 1px #f0f0f0;
}

.cue {
  width: 47%;
  border-right: 1px solid #aaa;
}

.message {
  flex: 1;
  padding-left: 4px;
  border-left: 1px solid #f4f4f4;
  font: bold 12px/21px "Liberation Mono", "Noto Sans CJK SC", monospace;
}

.status-cell {
  width: 20px;
  border-left: 1px solid #bbb;
}

.status-cell.wide {
  width: 36px;
}

.full-screen {
  width: 22px;
  display: grid;
  place-items: center;
  border-left: 1px solid #bbb;
}

.full-screen svg {
  width: 14px;
  height: 14px;
}

/* workspace */
.workspace {
  flex: 1;
  min-height: 0;
  display: flex;
}

.resource-bar {
  flex: none;
  width: 34px;
  display: flex;
  flex-direction: column;
  align-items: flex-end;
  gap: 2px;
  padding: 17px 1px 3px 0;
  border-right: 2px solid #777;
  background: linear-gradient(#8e8e8e, #b8b8b8 60%);
}

.tab {
  flex: none;
  width: 26px;
  height: 40px;
  display: grid;
  place-items: center;
  border: 1px solid #666;
  border-right: 0;
  border-radius: 4px 0 0 4px;
  background: linear-gradient(#e0e0e0, #c4c4c4);
}

.tab svg {
  width: 24px;
  height: 24px;
}

.tab.current {
  width: 28px;
  background: #ededed;
}

.tab.apart {
  margin-top: 12px;
}

.wave {
  width: 30px;
  height: 8px;
  margin-top: 3px;
}

.pager {
  display: flex;
  flex-direction: column;
  margin-right: 6px;
}

.pager button {
  width: 16px;
  height: 16px;
  display: grid;
  place-items: center;
  border: 1px solid #999;
  background: #e8e8e8;
  color: #444;
}

.pager button:disabled {
  color: #aaa;
}

.pager svg {
  width: 10px;
  height: 10px;
}

/* operation navigator */
.navigator {
  flex: none;
  width: 367px;
  display: flex;
  flex-direction: column;
  padding: 0 10px 4px 8px;
  border-right: 2px solid #888;
  background: #ebebeb;
}

.navigator h2 {
  display: flex;
  align-items: center;
  gap: 12px;
  height: 31px;
  padding-left: 6px;
  white-space: pre;
  font: bold 13px/31px "Liberation Mono", "Noto Sans CJK SC", monospace;
}

.navigator h2 svg {
  width: 12px;
  height: 12px;
}

.tree-box {
  flex: 1;
  min-height: 0;
  display: grid;
  grid-template: minmax(0, 1fr) 17px / minmax(0, 1fr) 17px;
  border: 1px solid #666;
  background: #ededed;
}

.tree-scroll {
  overflow: hidden;
  background: #fff;
}

.tree {
  width: 100%;
  table-layout: fixed;
  border-collapse: separate;
  border-spacing: 0;
}

.tree th {
  height: 17px;
  padding: 0 6px;
  border-right: 1px solid #aaa;
  border-bottom: 1px solid #888;
  background: linear-gradient(#f8f8f8, #e8eaea 50%, #d4d6d8);
  text-align: left;
  font: 12px/16px "Noto Sans CJK SC", sans-serif;
}

.tree th:last-child {
  border-right: 0;
}

.col-name {
  width: 156px;
}

.col-change {
  width: 100px;
}

.tree td {
  height: 20px;
  padding: 0 0 0 4px;
  border-right: 1px solid #e2e2e2;
  border-bottom: 1px solid #e2e2e2;
  font: 10px/19px "Liberation Mono", monospace;
}

.tree td:first-child {
  padding: 0;
  border-right-color: #000;
}

.tree td:last-child {
  border-right: 0;
}

.tree tbody tr:nth-child(odd) {
  background: #f6f6f6;
}

.node {
  display: flex;
  height: 19px;
  margin-bottom: -1px;
  padding-left: 1px;
}

.node span {
  flex: 1;
  height: 19px;
  padding-left: 2px;
  color: #222;
}

.node .cjk {
  font: 12px/19px "Noto Sans CJK SC", sans-serif;
}

.ic {
  width: 16px;
  height: 16px;
  margin-top: 2px;
}

.ln {
  flex: none;
  width: 19px;
  height: 20px;
  background: repeating-linear-gradient(#aaa 0 1px, transparent 1px 2px) 9px 0 / 1px 100% no-repeat;
}

.ln.start,
.ln.tee,
.ln.end {
  background:
    repeating-linear-gradient(90deg, #aaa 0 1px, transparent 1px 2px) 9px 10px / 10px 1px no-repeat,
    repeating-linear-gradient(#aaa 0 1px, transparent 1px 2px) 9px 0 / 1px 100% no-repeat;
}

.ln.start {
  background-position: 9px 10px, 9px 10px;
}

.ln.end {
  background-size: 10px 1px, 1px 10px;
}

.ln.box {
  display: grid;
  place-items: center;
}

.ln.box:before {
  content: "";
  width: 9px;
  height: 9px;
  border: 1px solid #777;
  border-radius: 2px;
  background: linear-gradient(#222, #222) center / 5px 1px no-repeat, #fff;
}

.ln.plus:before {
  background:
    linear-gradient(#222, #222) center / 5px 1px no-repeat,
    linear-gradient(#222, #222) center / 1px 5px no-repeat,
    #fff;
}

.op td,
.op .node span {
  color: #2a6cb8;
}

.op td .ic {
  height: 15px;
}

.selected td + td,
.selected .node span {
  background: #3399ff;
  border-top: 1px dotted #e08020;
  border-bottom: 1px dotted #e08020;
  color: #fff;
  line-height: 18px;
}

.selected .node span {
  height: 20px;
}

.vbar {
  grid-row: 1;
  grid-column: 2;
  display: flex;
  flex-direction: column;
}

.corner {
  height: 17px;
  border-bottom: 1px solid #888;
  background: linear-gradient(#f8f8f8, #e8eaea 50%, #d4d6d8);
}

.vbar .arrow {
  flex: none;
  height: 34px;
  display: flex;
  justify-content: center;
  padding-top: 8px;
}

.vbar .bottom {
  height: 49px;
  align-items: flex-end;
  padding: 0 0 6px;
}

.thumb {
  display: grid;
  place-items: center;
  border: 1px solid #999;
  border-radius: 2px;
  background: linear-gradient(90deg, #f4f4f4, #cfcfd2);
}

.vbar .thumb {
  flex: 1;
  margin-right: 2px;
}

.vbar .thumb:before {
  content: "";
  width: 7px;
  height: 8px;
  background: repeating-linear-gradient(#666 0 1px, transparent 1px 3px);
}

.hbar {
  grid-row: 2;
  grid-column: 1 / 3;
  display: flex;
}

.hbar .thumb {
  width: 144px;
  margin-bottom: 2px;
  background: linear-gradient(#f4f4f4, #cfcfd2);
}

.hbar .thumb:before {
  content: "";
  width: 9px;
  height: 7px;
  background: repeating-linear-gradient(90deg, #666 0 1px, transparent 1px 3px);
}

.hbar .arrow {
  width: 19px;
  display: grid;
  place-items: center;
}

.hbar .bottom {
  margin-left: auto;
  margin-right: 16px;
}

.up,
.left,
.right {
  display: block;
  width: 0;
  height: 0;
  border: 3px solid transparent;
}

.up {
  border-top-width: 0;
  border-bottom-color: #333;
}

.left {
  border-left-width: 0;
  border-right-color: #333;
}

.right {
  border-right-width: 0;
  border-left-color: #333;
}

.splitter {
  flex: none;
  height: 12px;
  display: flex;
  align-items: center;
  justify-content: center;
  background: linear-gradient(#bbb, #bbb) center / 100% 1px no-repeat;
}

.splitter span {
  width: 64px;
  height: 6px;
  border: 1px solid #999;
  border-width: 0 1px 1px 0;
  background: #d4d4d4;
  box-shadow: 0 0 0 4px #ebebeb;
}

.panel-head {
  flex: none;
  height: 23px;
  display: flex;
  align-items: stretch;
  border-right: 1px solid #888;
  border-bottom: 1px solid #999;
  background: linear-gradient(#f8f8f8 50%, #e2e4e4 50%, #d6d8d8);
  text-align: left;
  font: bold 13px/22px "Noto Sans CJK SC", sans-serif;
}

.panel-head span {
  flex: 1;
  padding-left: 7px;
  border-right: 1px solid #aaa;
}

.panel-head svg {
  width: 22px;
  height: 12px;
  margin-top: 5px;
}

/* graphics window */
.viewport {
  flex: 1;
  min-width: 0;
  border: 1px solid #e8964a;
  background: linear-gradient(#232425, #3c3d3e 36%, #555658 72%, #58595b);
}

.viewport svg {
  width: 100%;
  height: 100%;
}

.axis text {
  font: 13px "Liberation Sans", sans-serif;
}

/* bottom toolbar */
.dock {
  flex: none;
  height: 63px;
  display: flex;
  padding-bottom: 2px;
  border-top: 1px solid #999;
  background: linear-gradient(#e8e8e8, #cccccc);
}

/* upload button */
.upload {
  position: absolute;
  top: 27px;
  right: 107px;
  width: 104px;
  height: 25px;
  display: flex;
  align-items: center;
  border: 1px solid #2c88c8;
  border-radius: 3px;
  background: linear-gradient(170deg, #e8f6ff, #a4dafa);
  color: #3878a8;
  line-height: 23px;
  overflow: hidden;
}

.upload svg {
  width: 29px;
  height: 23px;
  background: #2494e4;
}

.upload span {
  flex: 1;
  text-align: center;
}

/* transfer speed */
.speed {
  position: absolute;
  right: 290px;
  bottom: 4px;
  width: 106px;
  height: 39px;
  display: flex;
  align-items: center;
  gap: 4px;
  padding: 0 4px 0 28px;
  border: 1px solid #aaa;
  border-radius: 20px;
  background: linear-gradient(#fafafa, #dedede);
  box-shadow: 0 1px 3px #888;
}

.speed strong {
  position: absolute;
  left: -21px;
  top: -7px;
  width: 48px;
  height: 48px;
  border: 2px solid #f4f4f4;
  border-radius: 50%;
  background: linear-gradient(#1c8058 26%, #58d468 26%, #3cc058);
  box-shadow: inset 0 0 0 2px #20844c, 0 0 0 1px #888;
  color: #fff;
  text-align: center;
  font: 14px/44px "Liberation Sans", sans-serif;
}

.speed dl {
  flex: 1;
  display: grid;
  grid-template-columns: 14px 1fr;
  row-gap: 3px;
  text-align: right;
  font: 10px/12px "Open Sans", sans-serif;
}

.speed dt {
  text-align: center;
  font: bold 10px/12px "DejaVu Sans", sans-serif;
}

.up-rate {
  color: #e85030;
}

.down-rate {
  color: #209850;
}

.speed button svg {
  width: 18px;
  height: 18px;
}

/* watermark */
.watermark {
  position: absolute;
  right: 24px;
  bottom: 13px;
  display: flex;
  align-items: center;
  gap: 8px;
  opacity: .8;
  pointer-events: none;
}

.watermark svg {
  width: 72px;
  height: 82px;
}

.watermark p {
  color: rgba(255, 255, 255, .6);
}

.watermark b,
.watermark small {
  display: block;
}

.watermark b {
  font: bold 41px/44px "Liberation Sans", "Noto Sans CJK SC", sans-serif;
}

.watermark small {
  padding-top: 4px;
  font: bold 16px/18px "DejaVu Sans", sans-serif;
}
```
